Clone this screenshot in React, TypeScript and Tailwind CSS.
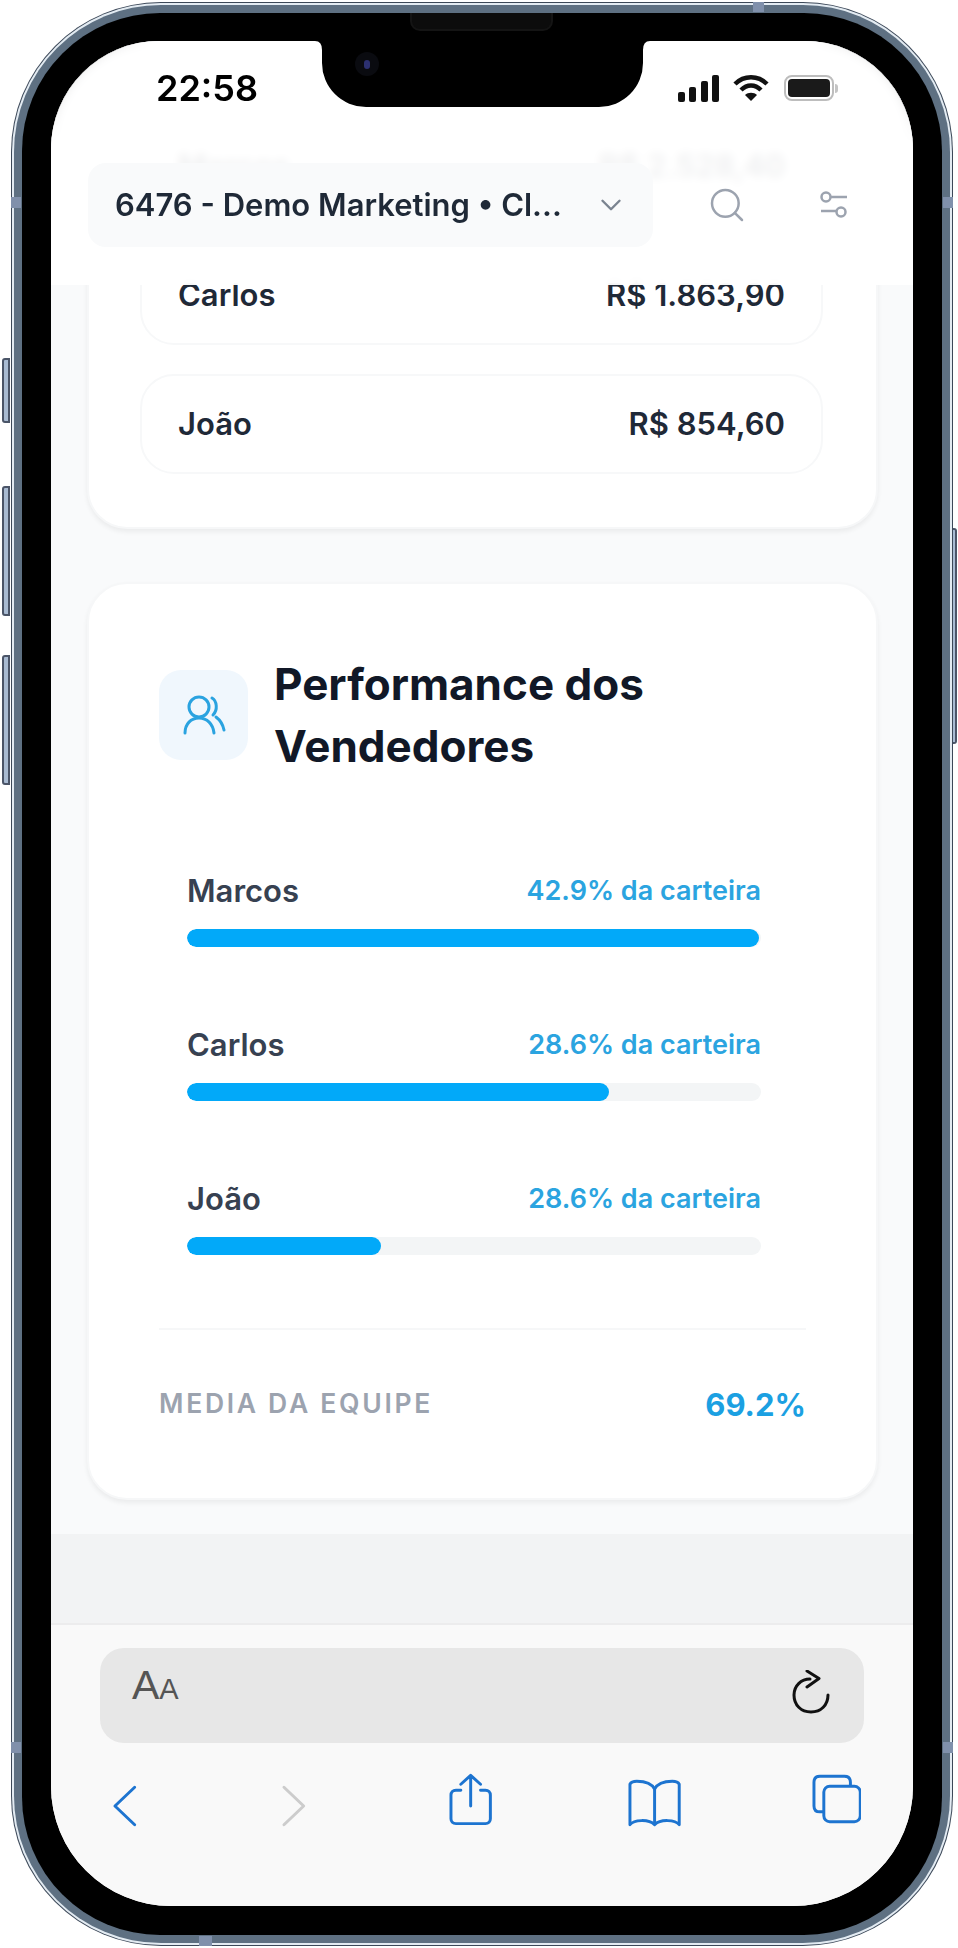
import { ChevronDown, Search } from "lucide-react";

const F = { fontFamily: "Inter, 'Noto Sans', sans-serif" };

function Row({ name, value, className = "" }: { name: string; value: string; className?: string }) {
  return (
    <div className={`flex h-[100px] items-center justify-between rounded-[34px] border-2 border-[#f7f8f9] bg-white pl-[36px] pr-[36px] text-[31px] font-semibold text-[#1f2937] ${className}`}>
      <span className="pt-[1px]">{name}</span>
      <span className="pt-[1px]">{value}</span>
    </div>
  );
}

function Progress({ name, pct, width, className = "" }: { name: string; pct: string; width: number; className?: string }) {
  return (
    <div className={className}>
      <div className="flex h-[40px] items-center justify-between">
        <span className="text-[31px] font-semibold text-[#374151]">{name}</span>
        <span className="text-[27px] font-semibold text-[#2ba4e0]">{pct}</span>
      </div>
      <div className="mt-[18px] h-[18px] overflow-hidden rounded-full bg-[#f3f5f6]">
        <div className="h-full rounded-full bg-[#02a9f9]" style={{ width: `${width}px` }} />
      </div>
    </div>
  );
}

function Band({ className }: { className: string }) {
  return <div className={`absolute bg-[#8090ab] ${className}`} />;
}

export default function App() {
  return (
    <div className="flex h-[1948px] w-[958px] overflow-hidden bg-white pl-[2px] pt-[2px]" style={F}>
      {/* left buttons */}
      <div className="flex w-[9px] flex-col pt-[356px]">
        <div className="h-[65px] w-[8px] rounded-l-[3px] border-2 border-[#4b5568] bg-[#a9bbd2]" />
        <div className="mt-[63px] h-[130px] w-[8px] rounded-l-[3px] border-2 border-[#4b5568] bg-[#a9bbd2]" />
        <div className="mt-[39px] h-[130px] w-[8px] rounded-l-[3px] border-2 border-[#4b5568] bg-[#a9bbd2]" />
      </div>

      {/* phone frame */}
      <div className="relative h-[1944px] w-[942px] rounded-[150px] bg-[#3c4858] p-px">
        <div className="h-full w-full rounded-[149px] bg-[#e3ebf2] p-[2px]">
          <div className="h-full w-full rounded-[147px] bg-[#5e7082] p-[8px]">
            <div className="h-full w-full rounded-[138px] bg-black pb-[29px] pl-[29px] pr-[29px] pt-[28px]">
              {/* screen */}
              <div className="relative flex h-[1865px] w-[862px] flex-col overflow-hidden rounded-t-[108px] rounded-b-[120px] bg-[#f9f9f9]">
                {/* page */}
                <div className="h-[1493px] bg-[#f9fafb] pl-[36px] pr-[35px] pt-[23px]">
                  <div className="rounded-[40px] border-2 border-[#f6f7f8] bg-white pb-[53px] pl-[51px] pr-[53px] pt-[50px] shadow-[0_3px_5px_rgba(0,0,0,0.06)]">
                    <Row name="Marcos" value="R$ 2.528,40" />
                    <Row name="Carlos" value="R$ 1.863,90" className="mt-[29px]" />
                    <Row name="João" value="R$ 854,60" className="mt-[29px]" />
                  </div>

                  <div className="mt-[53px] h-[918px] rounded-[40px] border-2 border-[#f6f7f8] bg-white px-[70px] pt-[69px] shadow-[0_3px_5px_rgba(0,0,0,0.06)]">
                    <div className="flex items-center gap-[26px]">
                      <div className="flex h-[90px] w-[89px] items-center justify-center rounded-[22px] bg-[#f0f7fd]">
                        <svg width="44" height="40" viewBox="0 0 44 40" fill="none" stroke="#2aa3e0" strokeWidth="3" strokeLinecap="round">
                          <circle cx="17" cy="12" r="10" />
                          <path d="M3 38C3 29 9 23 17 23C25 23 31 29 32 38" />
                          <path d="M30 3C35 6 36 15 31 20" />
                          <path d="M34 22C38 25 41 30 42 35" />
                        </svg>
                      </div>
                      <h2 className="w-[440px] text-[44px] font-bold leading-[62px] text-[#111827]">Performance dos Vendedores</h2>
                    </div>

                    <div className="mt-[94px] pl-[28px] pr-[45px]">
                      <Progress name="Marcos" pct="42.9% da carteira" width={572} />
                      <Progress name="Carlos" pct="28.6% da carteira" width={422} className="mt-[78px]" />
                      <Progress name="João" pct="28.6% da carteira" width={194} className="mt-[78px]" />
                    </div>

                    <div className="mt-[73px] border-t-2 border-[#f6f7f8] pt-[55px]">
                      <div className="flex h-[40px] items-center justify-between">
                        <span className="pb-[2px] text-[26.5px] font-semibold tracking-[2.7px] text-[#9ca3af]">MEDIA DA EQUIPE</span>
                        <span className="text-[31px] font-bold text-[#1ba0e2]">69.2%</span>
                      </div>
                    </div>
                  </div>
                </div>

                {/* gray strip */}
                <div className="h-[91px] border-b-2 border-[#ececed] bg-[#f2f3f4]" />

                {/* safari bar */}
                <div className="h-[281px] bg-[#f9f9f9] pl-[49px] pr-[49px] pt-[23px]">
                  <div className="flex h-[95px] w-[764px] items-start justify-between rounded-[24px] bg-[#e7e7e7] pl-[32px] pr-[34px]">
                    <div className="mt-[13px] flex items-baseline leading-[48px] text-[#555555]" style={{ fontFamily: "'Liberation Sans', sans-serif" }}>
                      <span className="text-[41px]">A</span>
                      <span className="text-[29px]">A</span>
                    </div>
                    <svg className="mt-[22px]" width="38" height="46" viewBox="0 0 38 46" fill="none" stroke="#111111" strokeWidth="3" strokeLinecap="round" strokeLinejoin="round">
                      <path d="M18 9C9 9 2 16 2 25C2 35 9 42 19 42C29 42 36 35 36 25" />
                      <path d="M15 1L27 8.500L15 17" />
                    </svg>
                  </div>

                  <div className="mt-[28px] flex h-[60px] w-[764px] items-start justify-between pl-[12px] pr-[3px]">
                    <svg width="26" height="42" viewBox="0 0 26 42" fill="none" stroke="#1d74d0" strokeWidth="3" className="mt-[14px]">
                      <path d="M23 2L3 21L23 40" strokeLinecap="round" strokeLinejoin="round" />
                    </svg>
                    <svg width="26" height="42" viewBox="0 0 26 42" fill="none" stroke="#cccccc" strokeWidth="3" className="ml-[143px] mt-[14px]">
                      <path d="M3 2L23 21L3 40" strokeLinecap="round" strokeLinejoin="round" />
                    </svg>
                    <svg width="44" height="54" viewBox="0 0 44 54" fill="none" stroke="#1d74d0" strokeWidth="3" className="ml-[143px] mt-[2px]" strokeLinecap="round" strokeLinejoin="round">
                      <path d="M12 17H7C4 17 2 19 2 22V46C2 49 4 51 7 51H37C40 51 42 49 42 46V22C42 19 40 17 37 17H32" />
                      <path d="M22 33V2M12 11L22 2L32 11" />
                    </svg>
                    <svg width="56" height="48" viewBox="0 0 56 48" fill="none" stroke="#1d74d0" strokeWidth="3" className="ml-[134px] mt-[8px]" strokeLinejoin="round">
                      <path d="M28 10C25 4 18 2 10 2C7 2 4 3 3 5V46C7 41 22 40 28 46C34 40 49 41 53 46V5C52 3 49 2 46 2C38 2 31 4 28 10Z" />
                      <path d="M28 10V46" />
                    </svg>
                    <svg width="50" height="50" viewBox="0 0 50 50" fill="none" stroke="#1d74d0" strokeWidth="3" className="ml-[130px] mt-[3px]" strokeLinejoin="round">
                      <path d="M39 12V8C39 4 37 2 33 2H8C4 2 2 4 2 8V32C2 36 4 38 8 38H12" />
                      <rect x="12" y="12" width="37" height="36" rx="6" />
                    </svg>
                  </div>
                </div>

                {/* header over the page */}
                <div className="absolute inset-x-0 top-0 h-[244px] bg-white/92 backdrop-blur-[5px]">
                  <div className="flex h-[122px] items-start justify-between pl-[105px] pr-[75px] pt-[27px]">
                    <span className="text-[36px] font-semibold leading-[40px] text-black">22:58</span>
                    <div className="mt-[6px] flex items-center">
                      <svg width="42" height="27" viewBox="0 0 42 27" fill="#111111">
                        <rect x="0" y="17" width="7" height="10" rx="2" />
                        <rect x="11" y="12" width="7" height="15" rx="2" />
                        <rect x="23" y="6" width="7" height="21" rx="2" />
                        <rect x="34" y="0" width="7" height="27" rx="2" />
                      </svg>
                      <svg className="ml-[13px]" width="36" height="28" viewBox="0 0 36 28" fill="none" stroke="#111111" strokeWidth="4.500">
                        <path d="M2 10C11 1 25 1 34 10" />
                        <path d="M8 16C14 10 22 10 28 16" />
                        <path d="M18 27L12 21C15 18 21 18 24 21Z" fill="#111111" stroke="none" />
                      </svg>
                      <div className="ml-[15px] flex h-[26px] w-[50px] items-center rounded-[8px] border-2 border-[#bdbdbd] p-[2px]">
                        <div className="h-full w-full rounded-[4px] bg-[#1a1a1a]" />
                      </div>
                      <div className="ml-px h-[9px] w-[3px] rounded-r-full bg-[#c4c4c4]" />
                    </div>
                  </div>
                  <div className="flex items-center pl-[37px]">
                    <div className="flex h-[84px] w-[565px] items-center rounded-[18px] bg-[#f9fafb] pl-[27px]">
                      <span className="w-[449px] truncate text-[31px] font-semibold text-[#1f2937]">6476 - Demo Marketing • Cl...</span>
                      <ChevronDown size={34} strokeWidth={1.7} className="ml-[30px] text-[#7b8490]" />
                    </div>
                    <Search size={40} strokeWidth={1.5} className="ml-[54px] text-[#9ca3af]" />
                    <svg className="ml-[73px]" width="28" height="28" viewBox="0 0 28 28" fill="none" stroke="#9ca3af" strokeWidth="2.500">
                      <circle cx="6" cy="6" r="4.500" />
                      <path d="M11 6H27" />
                      <circle cx="21" cy="21" r="4.500" />
                      <path d="M1 20H16" />
                    </svg>
                  </div>
                </div>

                {/* notch */}
                <svg className="absolute left-[264px] top-0" width="335" height="66" viewBox="0 0 335 66" fill="#000000">
                  <path d="M0 0H335Q328 0 328 9V22A44 44 0 0 1 284 66H51A44 44 0 0 1 7 22V9Q7 0 0 0Z" />
                </svg>
              </div>
            </div>
          </div>
        </div>

        {/* speaker and camera on the bezel */}
        <div className="absolute left-[399px] top-[11px] h-[18px] w-[143px] rounded-b-[10px] border-2 border-t-0 border-[#141414] bg-[#0c0c0c]" />
        <div className="absolute left-[344px] top-[50px] flex h-[24px] w-[24px] items-center justify-center rounded-full bg-[#0a0b10]">
          <div className="h-[9px] w-[6px] rounded-full bg-[#2c3070]" />
        </div>

        {/* antenna bands */}
        <Band className="left-0 top-[195px] h-[11px] w-[10px]" />
        <Band className="right-0 top-[195px] h-[11px] w-[10px]" />
        <Band className="left-0 top-[1740px] h-[11px] w-[10px]" />
        <Band className="right-0 top-[1740px] h-[11px] w-[10px]" />
        <Band className="left-[742px] top-0 h-[10px] w-[11px]" />
        <Band className="bottom-0 left-[188px] h-[10px] w-[13px]" />
      </div>

      {/* power button */}
      <div className="w-[4px] pt-[526px]">
        <div className="h-[216px] rounded-r-[3px] border-2 border-l-0 border-[#4b5568] bg-[#a9bbd2]" />
      </div>
    </div>
  );
}
